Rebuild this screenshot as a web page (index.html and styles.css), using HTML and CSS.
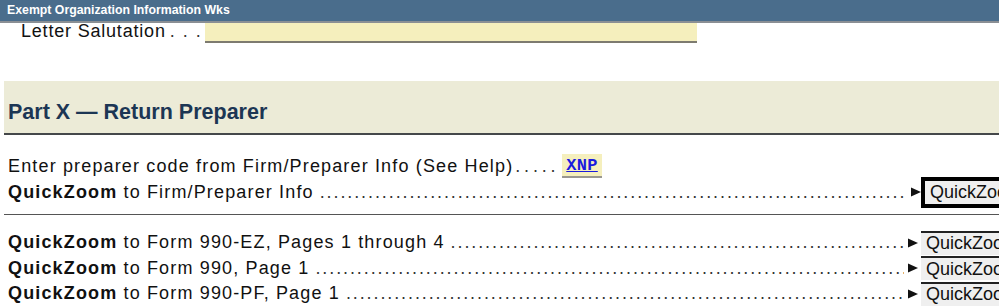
FILE: index.html
```html
<!DOCTYPE html>
<html lang="en">
  <head>
    <meta charset="UTF-8" />
    <title>Exempt Organization Information Wks</title>
    <link rel="stylesheet" href="styles.css">
  </head>
  <body>
    <div class="titlebar">Exempt Organization Information Wks</div>

    <div class="salutation">
      <span class="label">Letter Salutation</span>
      <span class="short-dots">. . .</span>
      <span class="field"></span>
    </div>

    <div class="part-head">Part X &mdash; Return Preparer</div>

    <div class="group">
      <div class="row">
        <span>Enter preparer code from Firm/Preparer Info (See Help)</span>
        <span class="short-dots wide">.....</span>
        <a class="code" href="#">XNP</a>
      </div>
      <div class="row">
        <span><b>QuickZoom</b> to Firm/Preparer Info</span>
        <span class="leader"></span>
        <svg class="arrow" viewBox="0 0 10 10"><polygon points="0,0.5 10,5 0,9.5" /></svg>
        <button class="qz focused">QuickZoom</button>
      </div>
    </div>

    <div class="divider"></div>

    <div class="group lower">
      <div class="row">
        <span><b>QuickZoom</b> to Form 990-EZ, Pages 1 through 4</span>
        <span class="leader"></span>
        <svg class="arrow" viewBox="0 0 10 10"><polygon points="0,0.5 10,5 0,9.5" /></svg>
        <button class="qz">QuickZoom</button>
      </div>
      <div class="row">
        <span><b>QuickZoom</b> to Form 990, Page 1</span>
        <span class="leader"></span>
        <svg class="arrow" viewBox="0 0 10 10"><polygon points="0,0.5 10,5 0,9.5" /></svg>
        <button class="qz">QuickZoom</button>
      </div>
      <div class="row">
        <span><b>QuickZoom</b> to Form 990-PF, Page 1</span>
        <span class="leader"></span>
        <svg class="arrow" viewBox="0 0 10 10"><polygon points="0,0.5 10,5 0,9.5" /></svg>
        <button class="qz">QuickZoom</button>
      </div>
    </div>
  </body>
</html>
```

FILE: styles.css
```css
body {
  margin: 0;
  font-family: "Liberation Sans", Arial, sans-serif;
  color: #111;
  background: #fff;
  overflow: hidden;
}
.titlebar {
  height: 21px;
  line-height: 20px;
  padding-left: 7px;
  background-color: #4a6d8c;
  color: #fff;
  font-size: 12.3px;
  font-weight: bold;
  border-bottom: 2px solid #8a8f94;
}
.salutation {
  display: flex;
  align-items: flex-start;
  height: 20px;
  padding-left: 21px;
  font-size: 18px;
  line-height: 17px;
  letter-spacing: 0.8px;
}
.short-dots {
  margin-left: 4px;
  margin-right: 3px;
  color: #333;
  letter-spacing: 1.5px;
}
.short-dots.wide {
  margin-left: 2px;
  letter-spacing: 3.8px;
}
.field {
  align-self: flex-end;
  width: 492px;
  height: 18px;
  background-color: #f5efbd;
  border-bottom: 2px solid #7d7b70;
}
.part-head {
  margin: 38px 0 0 4px;
  height: 52px;
  line-height: 62px;
  padding-left: 4px;
  background-color: #ecebd7;
  border-bottom: 2px solid #45484a;
  color: #1c3654;
  font-size: 21.5px;
  font-weight: bold;
}
.group {
  padding: 18px 0 0 8px;
}
.row {
  display: flex;
  align-items: center;
  height: 26px;
  font-size: 18px;
  letter-spacing: 1.15px;
  white-space: nowrap;
}
.leader {
  flex: 1;
  overflow: hidden;
  margin-left: 6px;
  color: #333;
  letter-spacing: 1.9px;
}
.leader::after {
  content: "....................................................................................................................................................................................................";
}
.code {
  display: inline-block;
  padding: 1px 4px 0;
  margin-left: 0;
  background-color: #f5efbd;
  border-bottom: 2px solid #9a9890;
  color: #1a1adf;
  font-family: "Liberation Mono", "Courier New", monospace;
  font-size: 17px;
  font-weight: bold;
  letter-spacing: 0.3px;
  line-height: 21px;
}
.arrow {
  width: 10px;
  height: 10px;
  margin: 0 3px 0 4px;
  fill: #111;
}
.qz {
  width: 84px;
  height: 24px;
  margin: 0 -6px 0 0;
  padding: 0 0 0 5px;
  text-align: left;
  font-family: "Liberation Sans", Arial, sans-serif;
  font-size: 18px;
  color: #111;
  background-color: #efefef;
  border: none;
  border-top: 2px solid #222;
}
.qz.focused {
  height: 31px;
  border: 4px solid #000;
  margin-left: -3px;
}
.divider {
  margin: 9px 0 0 4px;
  border-top: 1px solid #555;
}
.group.lower {
  padding-top: 15px;
}
.group.lower .row {
  height: 25.5px;
}
```
